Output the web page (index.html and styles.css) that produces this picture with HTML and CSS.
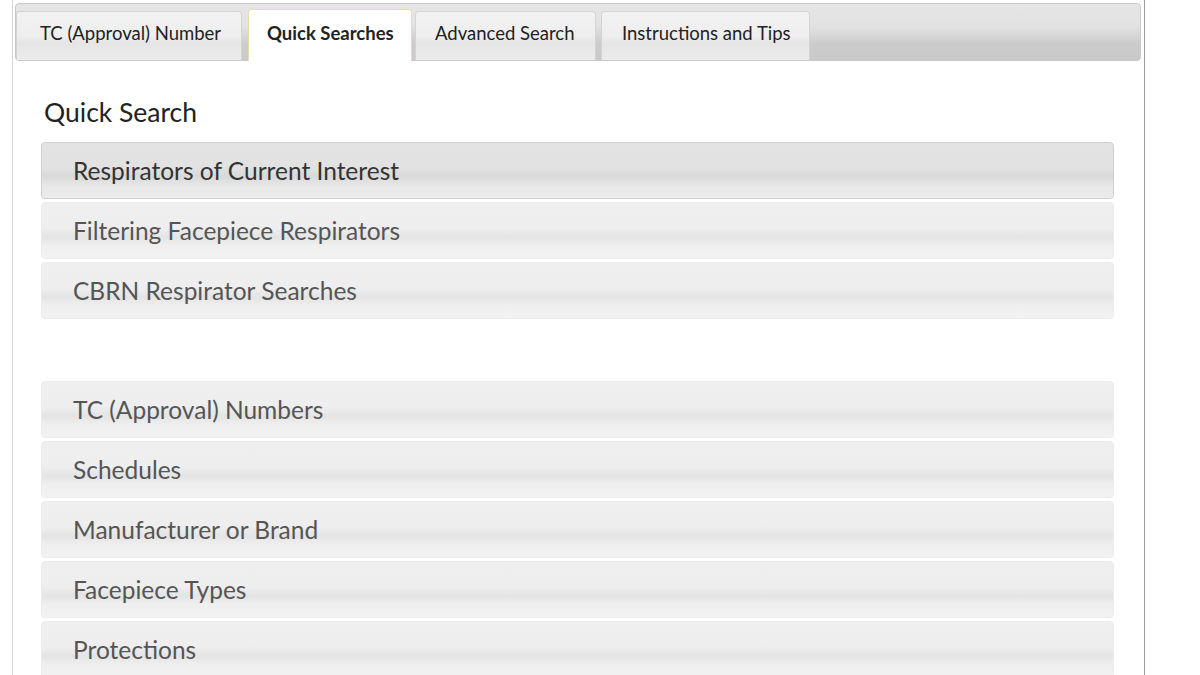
FILE: index.html
```html
<!DOCTYPE html>
<html>
<head>
<meta charset="utf-8">
<link rel="stylesheet" href="styles.css">
</head>
<body>
<div class="panel">
  <div class="tabbar">
    <div class="tab first">TC (Approval) Number</div>
    <div class="tab active">Quick Searches</div>
    <div class="tab">Advanced Search</div>
    <div class="tab">Instructions and Tips</div>
  </div>
  <div class="content">
    <h2 class="title">Quick Search</h2>
    <div class="group">
      <div class="item current">Respirators of Current Interest</div>
      <div class="item">Filtering Facepiece Respirators</div>
      <div class="item">CBRN Respirator Searches</div>
    </div>
    <div class="group">
      <div class="item">TC (Approval) Numbers</div>
      <div class="item">Schedules</div>
      <div class="item">Manufacturer or Brand</div>
      <div class="item">Facepiece Types</div>
      <div class="item">Protections</div>
    </div>
  </div>
</div>
</body>
</html>
```

FILE: styles.css
```css
html, body {
  margin: 0;
  padding: 0;
  background: #fff;
  font-family: Lato, "Open Sans", sans-serif;
  height: 675px;
  overflow: hidden;
}
.panel {
  margin-left: 12px;
  width: 1126px;
  height: 700px;
  border-left: 1px solid #d6d6d6;
  border-right: 1px solid #9c9c9c;
  padding: 3px 3px 0 2px;
  box-sizing: content-box;
}
.tabbar {
  display: flex;
  align-items: flex-end;
  height: 56px;
  border: 1px solid #c9c9c9;
  border-radius: 4px;
  background: linear-gradient(#e5e5e5 0%, #e2e2e2 40%, #cccccc 70%, #c9c9c9 100%);
}
.tab {
  height: 49px;
  display: flex;
  align-items: center;
  padding: 0 0 6px 23px;
  font-size: 18.5px;
  color: #222;
  background: linear-gradient(#f2f2f2 0%, #eeeeee 50%, #e5e5e5 65%, #ececec 100%);
  border: 1px solid #d4d4d4;
  border-bottom: none;
  border-radius: 4px 4px 0 0;
  margin-right: 5px;
  box-sizing: border-box;
  white-space: nowrap;
}
.tab.first {
  width: 226px;
  margin-right: 6px;
}
.tab.active {
  height: 52px;
  margin-bottom: -1px;
  background: #fff;
  border: 1px solid #ecdcaa;
  border-bottom: none;
  font-weight: bold;
  width: 164px;
  padding: 0 0 5px 18px;
  margin-right: 3px;
}
.tab:nth-child(3) { width: 181px; padding-left: 19px; }
.tab:nth-child(4) { width: 209px; padding-left: 20px; }
.content {
  padding: 0 27px 0 26px;
}
.title {
  margin: 0;
  padding: 35px 0 14px 3px;
  font-size: 26.5px;
  font-weight: normal;
  color: #222;
  line-height: 32px;
}
.group {
  display: flex;
  flex-direction: column;
  gap: 3px;
  margin-bottom: 62px;
}
.item {
  height: 57px;
  box-sizing: border-box;
  display: flex;
  align-items: center;
  padding-left: 31px;
  font-size: 24.5px;
  color: #555;
  border-radius: 4px;
  border: 1px solid #ececec;
  background: linear-gradient(#efefef 0%, #eeeeee 45%, #e4e4e4 62%, #efefef 78%, #f2f2f2 100%);
}
.item.current {
  color: #333;
  border-color: #cfcfcf;
  background: linear-gradient(#e3e3e3 0%, #e2e2e2 45%, #d9d9d9 60%, #e7e7e7 78%, #ececec 100%);
}
```
